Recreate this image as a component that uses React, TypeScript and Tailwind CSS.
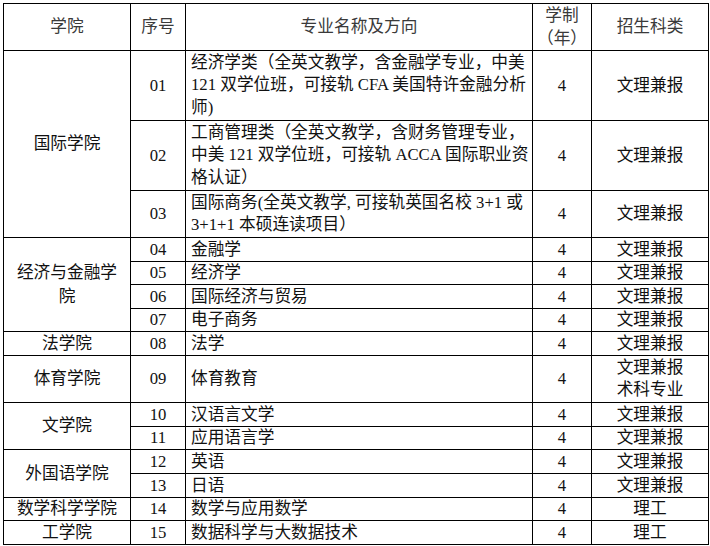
import React from "react";

const td = "border border-black p-0 align-middle text-center";
const tdL = "border border-black p-0 pl-[5px] align-middle text-left";

function Lines({ items }: { items: string[] }) {
  return (
    <div className="leading-[22.5px]">
      {items.map((t, i) => (
        <div key={i} className="whitespace-nowrap">
          {t}
        </div>
      ))}
    </div>
  );
}

export default function App() {
  return (
    <div className="bg-white w-[710px] h-[546px] pt-[3px] pl-[3px] font-['Liberation_Serif','Noto_Sans_CJK_SC',serif] text-[16.7px] leading-[22px] text-[#111]">
      <table className="border-collapse table-fixed w-[705px]">
        <colgroup>
          <col className="w-[127px]" />
          <col className="w-[55px]" />
          <col className="w-[347px]" />
          <col className="w-[59px]" />
          <col className="w-[117px]" />
        </colgroup>
        <tbody>
          <tr className="h-[47px] text-[#3a3a3a]">
            <td className={td}>学院</td>
            <td className={td}>序号</td>
            <td className={td}>专业名称及方向</td>
            <td className={td}>
              <div className="leading-[23px]">
                <div>学制</div>
                <div>（年）</div>
              </div>
            </td>
            <td className={td}>招生科类</td>
          </tr>
          <tr className="h-[70px]">
            <td className={td} rowSpan={3}>国际学院</td>
            <td className={td}>01</td>
            <td className={tdL}>
              <Lines
                items={[
                  "经济学类（全英文教学，含金融学专业，中美",
                  "121 双学位班，可接轨 CFA 美国特许金融分析",
                  "师)",
                ]}
              />
            </td>
            <td className={td}>4</td>
            <td className={td}>文理兼报</td>
          </tr>
          <tr className="h-[70px]">
            <td className={td}>02</td>
            <td className={tdL}>
              <Lines
                items={[
                  "工商管理类（全英文教学，含财务管理专业，",
                  "中美 121 双学位班，可接轨 ACCA 国际职业资",
                  "格认证）",
                ]}
              />
            </td>
            <td className={td}>4</td>
            <td className={td}>文理兼报</td>
          </tr>
          <tr className="h-[47px]">
            <td className={td}>03</td>
            <td className={tdL}>
              <Lines
                items={[
                  "国际商务(全英文教学, 可接轨英国名校 3+1 或",
                  "3+1+1 本硕连读项目）",
                ]}
              />
            </td>
            <td className={td}>4</td>
            <td className={td}>文理兼报</td>
          </tr>
          <tr className="h-[24px]">
            <td className={td} rowSpan={4}>
              <div className="leading-[24px]">
                <div>经济与金融学</div>
                <div>院</div>
              </div>
            </td>
            <td className={td}>04</td>
            <td className={tdL}>金融学</td>
            <td className={td}>4</td>
            <td className={td}>文理兼报</td>
          </tr>
          <tr className="h-[23px]">
            <td className={td}>05</td>
            <td className={tdL}>经济学</td>
            <td className={td}>4</td>
            <td className={td}>文理兼报</td>
          </tr>
          <tr className="h-[24px]">
            <td className={td}>06</td>
            <td className={tdL}>国际经济与贸易</td>
            <td className={td}>4</td>
            <td className={td}>文理兼报</td>
          </tr>
          <tr className="h-[23px]">
            <td className={td}>07</td>
            <td className={tdL}>电子商务</td>
            <td className={td}>4</td>
            <td className={td}>文理兼报</td>
          </tr>
          <tr className="h-[24px]">
            <td className={td}>法学院</td>
            <td className={td}>08</td>
            <td className={tdL}>法学</td>
            <td className={td}>4</td>
            <td className={td}>文理兼报</td>
          </tr>
          <tr className="h-[47px]">
            <td className={td}>体育学院</td>
            <td className={td}>09</td>
            <td className={tdL}>体育教育</td>
            <td className={td}>4</td>
            <td className={td}>
              <div className="leading-[22.5px]">
                <div>文理兼报</div>
                <div>术科专业</div>
              </div>
            </td>
          </tr>
          <tr className="h-[24px]">
            <td className={td} rowSpan={2}>文学院</td>
            <td className={td}>10</td>
            <td className={tdL}>汉语言文学</td>
            <td className={td}>4</td>
            <td className={td}>文理兼报</td>
          </tr>
          <tr className="h-[23px]">
            <td className={td}>11</td>
            <td className={tdL}>应用语言学</td>
            <td className={td}>4</td>
            <td className={td}>文理兼报</td>
          </tr>
          <tr className="h-[24px]">
            <td className={td} rowSpan={2}>外国语学院</td>
            <td className={td}>12</td>
            <td className={tdL}>英语</td>
            <td className={td}>4</td>
            <td className={td}>文理兼报</td>
          </tr>
          <tr className="h-[24px]">
            <td className={td}>13</td>
            <td className={tdL}>日语</td>
            <td className={td}>4</td>
            <td className={td}>文理兼报</td>
          </tr>
          <tr className="h-[23px]">
            <td className={td}>数学科学学院</td>
            <td className={td}>14</td>
            <td className={tdL}>数学与应用数学</td>
            <td className={td}>4</td>
            <td className={td}>理工</td>
          </tr>
          <tr className="h-[24px]">
            <td className={td}>工学院</td>
            <td className={td}>15</td>
            <td className={tdL}>数据科学与大数据技术</td>
            <td className={td}>4</td>
            <td className={td}>理工</td>
          </tr>
        </tbody>
      </table>
    </div>
  );
}
